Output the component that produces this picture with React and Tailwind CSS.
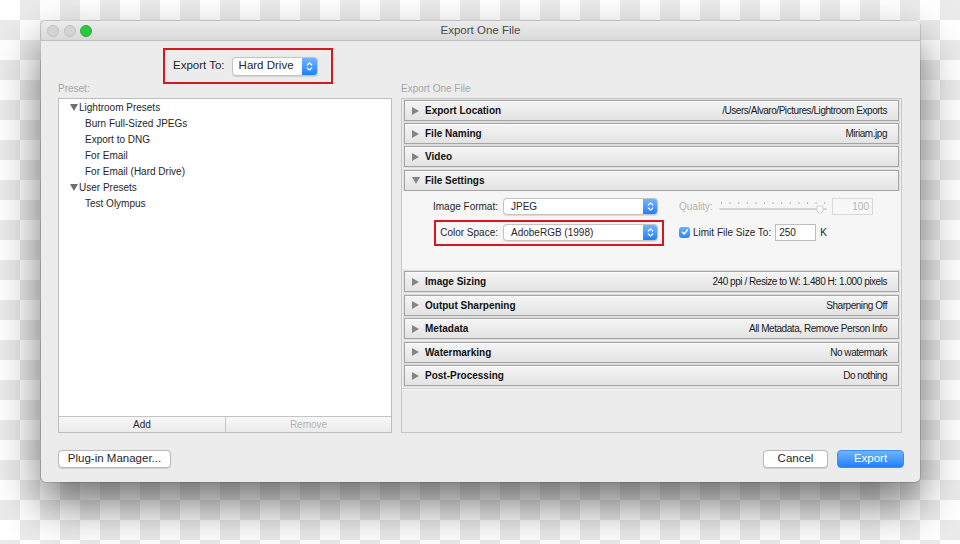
import React from 'react';

const font = { fontFamily: '"Liberation Sans", Arial, sans-serif' };

const Stepper = ({ cls }) => (
  <div className={`flex items-center justify-center bg-gradient-to-b from-[#6fb5fc] to-[#1b80fb] ${cls}`}>
    <svg width="7" height="11" viewBox="0 0 7 11" fill="none" stroke="#fff" strokeWidth="1.2" strokeLinecap="round" strokeLinejoin="round">
      <path d="M1.3 4 L3.5 1.8 L5.7 4" />
      <path d="M1.3 7 L3.5 9.2 L5.7 7" />
    </svg>
  </div>
);

const Popup = ({ value, cls, text = 'text-[10px]', pad = 'pl-[7px]', step = 'w-[14px]' }) => (
  <div className={`flex items-stretch bg-white border border-[#c4c4c4] rounded-[4px] overflow-hidden shadow-[0_0.5px_1px_rgba(0,0,0,0.12)] ${cls}`}>
    <div className={`flex-1 flex items-center whitespace-nowrap text-[#262626] ${text} ${pad}`}>{value}</div>
    <Stepper cls={step} />
  </div>
);

const RightTri = () => (
  <svg width="7" height="8" viewBox="0 0 7 8"><polygon points="0,0 7,4 0,8" fill="#858585" /></svg>
);

const DownTri = ({ color = '#858585' }) => (
  <svg width="8" height="7" viewBox="0 0 8 7"><polygon points="0,0 8,0 4,7" fill={color} /></svg>
);

const SectionHeader = ({ title, summary, open }) => (
  <div className="mx-[2px] h-[21px] flex items-center border border-[#a5a5a5] shadow-[0_0_0_1px_#dedede,inset_0_1px_0_#fbfbfb] bg-gradient-to-b from-[#f5f5f5] to-[#e3e3e3] pl-[7px] pr-[11px]">
    <div className="w-[13px] flex items-center">{open ? <DownTri /> : <RightTri />}</div>
    <span className="text-[10px] font-bold text-[#111] whitespace-nowrap">{title}</span>
    <span className="ml-auto text-[10px] tracking-[-0.45px] text-[#1a1a1a] whitespace-nowrap">{summary}</span>
  </div>
);

const sectionsTop = [
  ['Export Location', '/Users/Alvaro/Pictures/Lightroom Exports'],
  ['File Naming', 'Miriam.jpg'],
  ['Video', ''],
];

const sectionsBottom = [
  ['Image Sizing', '240 ppi / Resize to W: 1.480 H: 1.000 pixels'],
  ['Output Sharpening', 'Sharpening Off'],
  ['Metadata', 'All Metadata, Remove Person Info'],
  ['Watermarking', 'No watermark'],
  ['Post-Processing', 'Do nothing'],
];

const presets = [
  { label: 'Lightroom Presets', group: true },
  { label: 'Burn Full-Sized JPEGs' },
  { label: 'Export to DNG' },
  { label: 'For Email' },
  { label: 'For Email (Hard Drive)' },
  { label: 'User Presets', group: true },
  { label: 'Test Olympus' },
];

const Slider = () => (
  <svg width="112" height="17" viewBox="0 0 112 17">
    {Array.from({ length: 13 }).map((_, i) => (
      <rect key={i} x={3 + i * 8.6} y="4" width="1" height="2" fill="#b8b8b8" />
    ))}
    <rect x="1" y="10" width="108" height="2" rx="1" fill="#d4d4d4" />
    <path d="M99 8 L105 8 L105 13 L102 16 L99 13 Z" fill="#fafafa" stroke="#c9c9c9" strokeWidth="0.8" />
  </svg>
);

export default function App() {
  return (
    <div
      style={font}
      className="w-[960px] h-[544px] overflow-hidden bg-[conic-gradient(#ebebeb_25%,#ffffff_0_50%,#ebebeb_0_75%,#ffffff_0)] bg-[length:40px_40px] pt-[21px] pl-[41px]"
    >
      <div className="w-[879px] h-[461px] flex flex-col bg-[#ececec] rounded-[5px] shadow-[0_22px_45px_rgba(0,0,0,0.55),0_0_0_1px_rgba(0,0,0,0.12)]">
        {/* title bar */}
        <div className="relative h-[20px] flex items-center justify-center rounded-t-[5px] bg-gradient-to-b from-[#ececec] to-[#d9d9d9] border-b border-[#c2c2c2]">
          <div className="absolute left-[6px] top-[4px] flex gap-[4.5px]">
            <div className="w-[12px] h-[12px] rounded-full bg-[#d3d3d3] border border-[#c0c0c0]" />
            <div className="w-[12px] h-[12px] rounded-full bg-[#d3d3d3] border border-[#c0c0c0]" />
            <div className="w-[12px] h-[12px] rounded-full bg-[#2bc840] border border-[#22b236]" />
          </div>
          <span className="text-[11.5px] text-[#4a4a4a]">Export One File</span>
        </div>

        {/* body */}
        <div className="flex-1 flex flex-col px-[17px]">
          <div className="mt-[7px] ml-[105px] w-[170px] h-[36px] border-2 border-[#d8161e] flex items-center pl-[8px]">
            <span className="text-[11.5px] text-[#1e1e1e]">Export To:</span>
            <Popup value="Hard Drive" cls="ml-[7px] w-[86px] h-[19px]" text="text-[11.5px]" pad="pl-[6px]" step="w-[15px]" />
          </div>

          <div className="h-[14px] flex text-[10px] leading-[10px] text-[#a6a6a6]">
            <span className="w-[343px]">Preset:</span>
            <span>Export One File</span>
          </div>

          <div className="flex gap-[9px] h-[335px]">
            {/* presets list */}
            <div className="w-[334px] flex flex-col border border-[#bdbdbd]">
              <div className="flex-1 bg-white">
                {presets.map((p) => (
                  <div key={p.label} className="h-[16px] flex items-center text-[10px] text-[#262626]">
                    {p.group ? (
                      <>
                        <span className="ml-[11px] w-[9px] flex"><DownTri color="#6f6f6f" /></span>
                        <span>{p.label}</span>
                      </>
                    ) : (
                      <span className="ml-[26px]">{p.label}</span>
                    )}
                  </div>
                ))}
              </div>
              <div className="h-[16px] flex border-t border-[#c4c4c4] bg-gradient-to-b from-[#f8f8f8] to-[#ebebeb] text-[10px]">
                <div className="w-[167px] flex items-center justify-center text-[#262626] border-r border-[#c4c4c4]">Add</div>
                <div className="flex-1 flex items-center justify-center text-[#b3b3b3]">Remove</div>
              </div>
            </div>

            {/* export settings */}
            <div className="w-[501px] flex flex-col border border-[#c6c6c6] bg-[#f0f0f0] pt-[1px]">
              {sectionsTop.map(([t, s], i) => (
                <div key={t} className={i ? 'mt-[2px]' : ''}>
                  <SectionHeader title={t} summary={s} />
                </div>
              ))}
              <div className="mt-[2.5px]">
                <SectionHeader title="File Settings" summary="" open />
              </div>
              <div className="h-[78.5px] bg-[#f6f6f6] flex pt-[7.5px] pl-[32px]">
                <div className="w-[230px] flex flex-col">
                  <div className="h-[17px] flex items-center justify-end pr-[6px]">
                    <span className="text-[10px] text-[#262626] mr-[5px] whitespace-nowrap">Image Format:</span>
                    <Popup value="JPEG" cls="w-[155px] h-[17px] shrink-0" />
                  </div>
                  <div className="mt-[4.5px] h-[26px] border-2 border-[#d8161e] flex items-center justify-end pr-[4px]">
                    <span className="text-[10px] text-[#262626] mr-[5px] whitespace-nowrap">Color Space:</span>
                    <Popup value="AdobeRGB (1998)" cls="w-[155px] h-[17px] shrink-0" />
                  </div>
                </div>
                <div className="ml-[15px] flex flex-col">
                  <div className="h-[17px] flex items-center">
                    <span className="text-[10px] text-[#b4b4b4] w-[39px]">Quality:</span>
                    <Slider />
                    <div className="ml-[2px] w-[41px] h-[17px] border border-[#d9d9d9] bg-[#f7f7f7] flex items-center justify-end pr-[3px] text-[10px] text-[#b4b4b4]">100</div>
                  </div>
                  <div className="mt-[8.5px] h-[17px] flex items-center">
                    <div className="w-[11px] h-[11px] rounded-[3px] bg-gradient-to-b from-[#69b0fb] to-[#2a86fa] flex items-center justify-center">
                      <svg width="8" height="8" viewBox="0 0 8 8" fill="none" stroke="#fff" strokeWidth="1.4" strokeLinecap="round" strokeLinejoin="round">
                        <path d="M1.5 4.2 L3.2 6 L6.5 1.8" />
                      </svg>
                    </div>
                    <span className="ml-[3px] text-[10px] text-[#262626] whitespace-nowrap">Limit File Size To:</span>
                    <div className="ml-[4px] w-[41px] h-[17px] border border-[#bdbdbd] bg-white flex items-center pl-[3px] text-[10px] text-[#262626]">250</div>
                    <span className="ml-[4px] text-[10px] text-[#262626]">K</span>
                  </div>
                </div>
              </div>
              {sectionsBottom.map(([t, s], i) => (
                <div key={t} className={i ? 'mt-[2.5px]' : 'mt-[2px]'}>
                  <SectionHeader title={t} summary={s} />
                </div>
              ))}
              <div className="flex-1 mt-[2px] border-t border-[#cfcfcf] bg-[#ebebeb] shadow-[inset_0_1px_0_#f7f7f7]" />
            </div>
          </div>

          {/* footer buttons */}
          <div className="mt-[17px] flex items-center">
            <button className="w-[113px] h-[18px] rounded-[4px] bg-white border border-[#bababa] shadow-[0_0.5px_1px_rgba(0,0,0,0.12)] text-[11.5px] text-[#262626] flex items-center justify-center">
              Plug-in Manager...
            </button>
            <button className="ml-auto w-[65px] h-[18px] rounded-[4px] bg-white border border-[#bababa] shadow-[0_0.5px_1px_rgba(0,0,0,0.12)] text-[11.5px] text-[#262626] flex items-center justify-center">
              Cancel
            </button>
            <button className="ml-[9px] mr-[-1px] w-[67px] h-[18px] rounded-[4px] bg-gradient-to-b from-[#6db4fd] to-[#1e7ffb] border border-[#3d8bf3] text-[11.5px] text-white flex items-center justify-center">
              Export
            </button>
          </div>
        </div>
      </div>
    </div>
  );
}
